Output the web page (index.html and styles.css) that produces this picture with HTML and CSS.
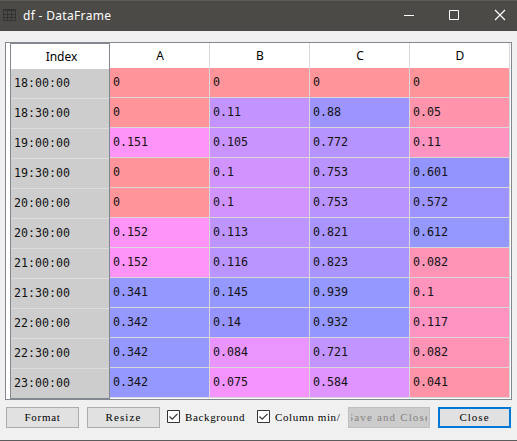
FILE: index.html
```html
<!DOCTYPE html>
<html lang="en">
<head>
<meta charset="utf-8">
<title>df - DataFrame</title>
<link rel="stylesheet" href="styles.css">
</head>
<body>
<div class="window">
  <header class="titlebar">
    <svg class="app-icon" width="13" height="12" viewBox="0 0 13 12" fill="none" stroke="#343434"><path d="M.5 1.500h12v10H.5z"/><path d="M0 1h13" stroke-width="2"/><path d="M0 5.500h13M0 8.500h13M4.500 1v10M8.500 1v10"/></svg>
    <h1 class="title">df - DataFrame</h1>
    <svg class="controls" width="103" height="12" viewBox="0 0 103 12" fill="none" stroke="#fff"><path d="M0 6.500h10M45.500 1.500h9v9h-9z"/><path d="M91 1l10 10M101 1l-10 10" stroke-width="1.200"/></svg>
  </header>
  <main class="frame">
    <div class="index-table">
      <div class="index-head">Index</div>
      <div class="index-body" id="index"></div>
    </div>
    <div class="data-table">
      <div class="row head"><div>A</div><div>B</div><div>C</div><div>D</div></div>
      <div id="data"></div>
    </div>
  </main>
  <footer class="toolbar">
    <button class="btn format">Format</button>
    <button class="btn resize">Resize</button>
    <label class="check background"><svg width="13" height="13" viewBox="0 0 13 13"><path d="M.5.5h12v12H.5z" fill="#fff" stroke="#333"/><path d="M2.500 6.500l2.700 2.700 5.300-5.400" fill="none" stroke="#333" stroke-width="1.200"/></svg><span>Background</span></label>
    <label class="check minmax"><svg width="13" height="13" viewBox="0 0 13 13"><path d="M.5.5h12v12H.5z" fill="#fff" stroke="#333"/><path d="M2.500 6.500l2.700 2.700 5.300-5.400" fill="none" stroke="#333" stroke-width="1.200"/></svg><span>Column min/</span></label>
    <button class="btn save" disabled><span>Save and Close</span></button>
    <button class="btn close">Close</button>
  </footer>
</div>
<script src="table.js"></script>
</body>
</html>
```
FILE: styles.css
```css
* { box-sizing: border-box; }
body { margin: 0; width: 517px; height: 441px; overflow: hidden; }
.window {
  height: 441px;
  background: #f0f0f0;
  border-bottom: 1px solid #5c5c5c;
  display: flex;
  flex-direction: column;
}
.titlebar {
  height: 31px;
  flex: none;
  background: #4b4a46;
  border-top: 1px solid #5b5b58;
  display: flex;
  align-items: center;
  padding: 0 10px 0 3px;
}
.app-icon { margin-top: -3px; }
.controls { margin-top: -2px; }
.title {
  margin: 0 auto 0 7px;
  font: 400 12px/16px "Noto Sans", sans-serif;
  letter-spacing: .32px;
  color: #fff;
}
.frame {
  margin: 11px 5px 0;
  width: 507px;
  height: 358px;
  flex: none;
  border: 1px solid #828790;
  background: #fff;
  display: flex;
  padding-left: 4px;
}
.index-table {
  width: 100px;
  height: 356px;
  border: 1px solid #828790;
  font: 11.65px/29px "DejaVu Sans Mono", monospace;
  color: #111;
}
.index-head {
  height: 25px;
  font: 12px/26px "Noto Sans", sans-serif;
  text-align: center;
  padding-left: 3px;
  color: #000;
}
.index-body { background: #cdcdcd; }
.index-body div {
  height: 30px;
  padding-left: 3px;
  border-bottom: 1px solid #dcdcdc;
}
.index-body div:last-child { height: 29px; border-bottom: 0; }
.data-table {
  width: 400px;
  font: 11.65px/29px "DejaVu Sans Mono", monospace;
  color: #111;
}
.row { display: grid; grid-template-columns: repeat(4, 100px); }
.row div {
  height: 30px;
  padding-left: 3px;
  border-right: 1px solid #d8d8d8;
  border-bottom: 1px solid #d8d8d8;
  background-clip: padding-box;
}
.row.head div {
  height: 25px;
  padding: 0 0 0 1px;
  font: 12px/25px "Noto Sans", sans-serif;
  text-align: center;
  border-bottom: 0;
  color: #000;
}
.toolbar {
  display: flex;
  align-items: flex-start;
  padding: 7px 6px 0;
  font: 11px/19px "Liberation Serif", serif;
  color: #000;
}
.btn {
  width: 73px;
  height: 21px;
  padding: 0;
  font: inherit;
  color: #000;
  background: #e1e1e1;
  border: 1px solid #adadad;
  border-radius: 0;
  flex: none;
}
.format { letter-spacing: .7px; }
.resize { margin-left: 8px; letter-spacing: 1.1px; }
.save {
  width: 82px;
  margin-left: 7px;
  letter-spacing: 1.15px;
  color: #838383;
  background: #ccc;
  border-color: #bfbfbf;
}
.save span {
  display: flex;
  justify-content: center;
  width: 76px;
  margin: 0 auto;
  overflow: hidden;
  white-space: nowrap;
}
.close {
  margin-left: 8px;
  border: 2px solid #0078d7;
  line-height: 17px;
  letter-spacing: 1px;
}
.check { display: flex; flex: none; height: 21px; overflow: hidden; }
.check svg { margin: 3px 5px 0 0; flex: none; }
.check span { white-space: nowrap; line-height: 20px; letter-spacing: .64px; }
.background { width: 82px; margin-left: 7px; }
.minmax { width: 84px; margin-left: 8px; }
```
FILE: table.js
```js
const rows = [
  ["18:00:00", 0, 0, 0, 0],
  ["18:30:00", 0, 0.11, 0.88, 0.05],
  ["19:00:00", 0.151, 0.105, 0.772, 0.11],
  ["19:30:00", 0, 0.1, 0.753, 0.601],
  ["20:00:00", 0, 0.1, 0.753, 0.572],
  ["20:30:00", 0.152, 0.113, 0.821, 0.612],
  ["21:00:00", 0.152, 0.116, 0.823, 0.082],
  ["21:30:00", 0.341, 0.145, 0.939, 0.1],
  ["22:00:00", 0.342, 0.14, 0.932, 0.117],
  ["22:30:00", 0.342, 0.084, 0.721, 0.082],
  ["23:00:00", 0.342, 0.075, 0.584, 0.041]
];
const max = [0.342, 0.145, 0.939, 0.612];
const index = document.getElementById("index");
const data = document.getElementById("data");
for (const [time, ...values] of rows) {
  const label = document.createElement("div");
  label.textContent = time;
  index.append(label);
  const row = document.createElement("div");
  row.className = "row";
  values.forEach((value, i) => {
    const cell = document.createElement("div");
    cell.textContent = value;
    // Hue runs from red at the column minimum to blue at its maximum
    const hue = 356.4 - 118.8 * value / max[i];
    cell.style.backgroundColor = `hsla(${hue}, 100%, 65%, 0.6)`;
    row.append(cell);
  });
  data.append(row);
}
```
